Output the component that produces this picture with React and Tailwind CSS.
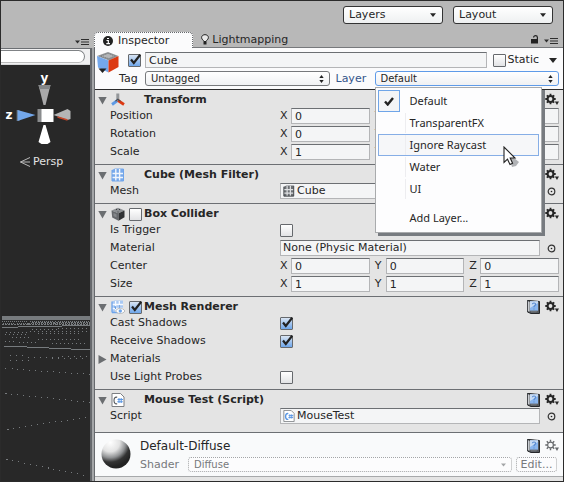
import React from "react";

function Check({ checked = false, label, id }) {
  return (
    <span className="grid size-[13px] shrink-0">
      <input
        id={id}
        type="checkbox"
        defaultChecked={checked}
        aria-label={label}
        className="peer col-start-1 row-start-1 size-[13px] appearance-none rounded-[1px] border border-[#66696d] bg-linear-to-b from-white to-[#e2e3e5] checked:from-[#d9e4f2] checked:to-[#6ea6ea]"
      />
      <svg
        viewBox="0 0 13 13"
        className="pointer-events-none invisible col-start-1 row-start-1 size-[13px] overflow-visible peer-checked:visible"
      >
        <path d="M3 5.5 L5.8 9 L12.2 0.8" fill="none" stroke="#222" strokeWidth="2.2" />
      </svg>
    </span>
  );
}

function Fold({ open = true }) {
  return (
    <svg viewBox="0 0 9 9" className="size-[9px] shrink-0" fill="#6b6e71">
      {open ? <path d="M0.3 1 H8.7 L4.5 8.6 Z" /> : <path d="M0.5 0 L8.5 4.5 L0.5 9 Z" />}
    </svg>
  );
}

function Gear({ dim = false }) {
  const color = dim ? "#66696c" : "#262626";
  return (
    <svg viewBox="0 0 14 14" className="h-[14px] w-[14px]">
      <circle cx="5.5" cy="6" r="2.9" fill="none" stroke={color} strokeWidth={dim ? 1.2 : 2} />
      <path
        d="M5.5 0.8v2M5.5 9.2v2M0.3 6h2M8.7 6h2M1.8 2.3L3.2 3.7M7.8 8.3L9.2 9.7M1.8 9.7L3.2 8.3M7.8 3.7L9.2 2.3"
        stroke={color}
        strokeWidth={dim ? 1.4 : 1.8}
      />
      <path d="M9.8 8.6H14L12 12Z" fill={color} />
    </svg>
  );
}

function HelpBook() {
  return (
    <svg viewBox="0 0 13 14" className="h-[14px] w-[13px]">
      <path d="M0.5 0.5H2L12.5 1.5V13.5H4L0.5 12Z" fill="#55585c" stroke="#26282b" />
      <path d="M0.5 0.5L3 1.8V12.2L0.5 11.5Z" fill="#c9cdd2" stroke="#26282b" strokeWidth=".6" />
      <path d="M3 1.2H11V10.8H3Z" fill="#8ab6ee" />
      <path d="M3 1.2H11V3L3 8Z" fill="#e4ecf6" opacity=".7" />
      <path d="M5.4 4.2C5.6 2.6 8.7 2.6 8.6 4.4C8.5 5.6 7 5.6 7 7.2M7 8.4V9.6" fill="none" stroke="#5a8cd2" strokeWidth="1.2" />
      <path d="M3 10.8H11L9 12.4H4Z" fill="#6d7176" />
    </svg>
  );
}

function Caret({ className }) {
  return (
    <svg viewBox="0 0 8 5" className={className}>
      <path d="M0 0H8L4 5Z" fill="currentColor" />
    </svg>
  );
}

function PaneMenu() {
  return (
    <svg viewBox="0 0 14 7" className="h-[7px] w-[14px]" fill="#2e2e2e">
      <path d="M0 1.5H5L2.5 4.5Z" />
      <path d="M6 0.5H14M6 3H14M6 5.5H14" stroke="#2e2e2e" strokeWidth="1.2" />
    </svg>
  );
}

function UpDown() {
  return (
    <svg viewBox="0 0 5 8" className="pointer-events-none col-start-1 row-start-1 mr-[6px] h-[8px] w-[5px] self-center justify-self-end" fill="#222">
      <path d="M0.3 3L2.5 0L4.7 3ZM0.3 5L2.5 8L4.7 5Z" />
    </svg>
  );
}

function Toolbar({ name }) {
  return (
    <div className="grid h-[18px] w-[100px]">
      <select
        aria-label={name}
        className="col-start-1 row-start-1 h-[18px] w-full appearance-none rounded-[3px] border border-[#333] bg-linear-to-b from-white to-[#eef0f1] pl-[5px] text-[11px] leading-[14px]"
      >
        <option>{name}</option>
      </select>
      <Caret className="pointer-events-none col-start-1 row-start-1 mr-[7px] h-[4px] w-[6px] self-center justify-self-end" />
    </div>
  );
}

function Section({ icon, title, enabled, help = false, last = false, children }) {
  return (
    <section className={`border-b border-[#6c6f73] pr-[4px] pl-[3px] ${last ? "pb-[7px]" : "pb-[3px]"}`}>
      <header className="flex h-[17px] items-center pt-[3px]">
        <Fold />
        <span className="ml-[4px] flex h-[14px] w-[18px] items-center">{icon}</span>
        <span className="w-[15px] shrink-0">
          {enabled !== undefined && <Check checked={enabled} label={`${title} enabled`} />}
        </span>
        <h2 className="flex-1 text-[11px] leading-[14px] font-bold whitespace-nowrap">{title}</h2>
        <span className="flex items-center gap-[5px]">
          {help && (
            <button aria-label={`${title} help`}>
              <HelpBook />
            </button>
          )}
          <button aria-label={`${title} settings`}>
            <Gear />
          </button>
        </span>
      </header>
      {children}
    </section>
  );
}

function Row({ label, id, children }) {
  return (
    <div className="flex h-[18px] items-center pl-[12px]">
      <label htmlFor={id} className="w-[170px] shrink-0 whitespace-nowrap">
        {label}
      </label>
      {children}
    </div>
  );
}

const fieldBox = "border border-[#b4b5b7] border-t-[#6c6f73] bg-[#f4f5f6]";

function Vector({ label, value }) {
  return (
    <Row label={label} id={`${label}-X`}>
      <div className="flex flex-1 gap-[5px]">
        {["X", "Y", "Z"].map((axis) => (
          <div key={axis} className="flex min-w-0 flex-1 items-center">
            <label htmlFor={`${label}-${axis}`} className="w-[11px] shrink-0">
              {axis}
            </label>
            <input
              id={`${label}-${axis}`}
              defaultValue={value}
              className={`h-[16px] w-full min-w-0 flex-1 pl-[3px] ${fieldBox}`}
            />
          </div>
        ))}
      </div>
    </Row>
  );
}

function ObjectField({ label, value, icon }) {
  return (
    <Row label={label} id={`field-${label}`}>
      <div className={`flex h-[16px] flex-1 items-center gap-[2px] pl-[2px] ${fieldBox}`}>
        {icon}
        <input id={`field-${label}`} readOnly value={value} className="w-full min-w-0 flex-1 bg-transparent" />
      </div>
      <button aria-label={`Pick ${label}`} className="ml-[7px] mr-[3px]">
        <svg viewBox="0 0 9 9" className="size-[9px]">
          <circle cx="4.5" cy="4.5" r="3.3" fill="none" stroke="#333" strokeWidth="1.2" />
          <circle cx="4.5" cy="4.5" r=".8" fill="#222" />
        </svg>
      </button>
    </Row>
  );
}

function Toggle({ label, checked }) {
  return (
    <Row label={label} id={`toggle-${label}`}>
      <Check id={`toggle-${label}`} checked={checked} />
    </Row>
  );
}

const CubeIcon = () => (
  <svg viewBox="0 0 22 22" className="size-[22px] shrink-0">
    <path d="M0 4L11 0L21.5 4L12 8.5Z" fill="#8f9295" />
    <path d="M4 4.2L11 1.4L17.5 4L12 6.6Z" fill="#b3b5b7" strokeDasharray="1 1" stroke="#6b6e71" strokeWidth=".7" />
    <path d="M0 4L11.5 8.5V20.5L1 15.5Z" fill="#74a8ec" />
    <path d="M11.5 8.5L21.5 4V15L11.5 20.5Z" fill="#dc3912" />
    <path d="M1.5 16.5H9.5L5.5 21Z" fill="#222" />
  </svg>
);

const TransformIcon = () => (
  <svg viewBox="0 0 14 14" className="size-[14px]" fill="none">
    <path d="M6.8 0.5V7.5" stroke="#94979a" strokeWidth="3" />
    <path d="M6.5 7.5L1 11.5" stroke="#5e9be6" strokeWidth="2.8" />
    <path d="M7 7.5L13 11.5" stroke="#dc3912" strokeWidth="2.8" />
    <path d="M4.5 8.2L6.8 6.3L9.5 8.2" stroke="#4c4f53" strokeWidth="1.2" />
  </svg>
);

const MeshIcon = ({ dark = false }) => (
  <svg viewBox="0 0 14 14" className={dark ? "size-[12px] shrink-0" : "size-[14px]"}>
    <path d="M1 2L4 0.5H12.5V13H1Z" fill={dark ? "#6d7074" : "#79aaeb"} />
    <path d="M1 5.5H12.5M1 9.5H12.5M4.8 1V13M8.6 1V13" stroke={dark ? "#dfe1e3" : "#f1f6fc"} strokeWidth="1.4" />
    <path d="M1 2V13H12.5V1" fill="none" stroke={dark ? "#3b3e42" : "#6ea4ea"} />
  </svg>
);

const ColliderIcon = () => (
  <svg viewBox="0 0 14 14" className="size-[14px]">
    <path d="M0.5 3.5L7 0.8L13.5 3.5L7.5 6.3Z" fill="#8c8f92" />
    <path d="M0.5 3.5L7.5 6.3V13.7L1.2 10.6Z" fill="#66696c" />
    <path d="M7.5 6.3L13.5 3.5V10.2L7.5 13.7Z" fill="#303234" />
    <path d="M2.5 6L5.5 7.3V10.5L2.5 9Z" fill="#85888b" />
    <path d="M5 2.8L6 2M9 3L8 2M7 4.5V5.5M9.5 8L11.5 7" stroke="#35383b" />
  </svg>
);

const RendererIcon = () => (
  <svg viewBox="0 0 14 14" className="size-[14px]">
    <path d="M1 1.5L4 0.5H12V12.5H1Z" fill="#a9c9f3" />
    <path d="M1 4.5H12M1 8.5H12M4.6 1V12.5M8.3 1V12.5" stroke="#f7faff" strokeWidth="1.3" />
    <path d="M1 12.5V1.5M1 12.5H7" stroke="#6ea4ea" strokeWidth="1.3" />
    <path d="M4.6 6.5V9M8.3 5V8M3 7H5" stroke="#5f97df" />
    <path d="M4.5 11C7 7.4 11.5 7.4 14 11C11.5 14.4 7 14.4 4.5 11Z" fill="#fff" stroke="#a8acb0" strokeWidth=".8" />
    <circle cx="9.3" cy="11" r="1.7" fill="#6ea4ea" />
  </svg>
);

const ScriptIcon = ({ small = false }) => (
  <svg viewBox="0 0 14 14" className={small ? "size-[12px] shrink-0" : "size-[14px]"} fill="none">
    <path d="M1 0.5H9.5L13 4V13.5H1Z" fill="#fff" stroke="#7c7f83" />
    <path d="M6.2 4.2C3.8 3.8 3 5.5 3 7.5C3 9.7 4 11.4 6.2 10.8" stroke={small ? "#5b97e3" : "#54585d"} strokeWidth={small ? 1.7 : 1.1} />
    <path d="M8 5V10M10.2 5V10M6.5 6.5H12M6.3 8.7H11.8" stroke="#5b97e3" strokeWidth="1.1" />
  </svg>
);

function LayerMenu() {
  const items = ["Default", "TransparentFX", "Ignore Raycast", "Water", "UI"];
  return (
    <div
      role="menu"
      className="absolute top-[16px] left-0 z-10 w-[167px] border border-[#a9abad] bg-[#fdfdfe] p-[2px] pb-[3px] font-['Noto_Sans','Open_Sans',sans-serif] text-[11px] leading-[20px] shadow-[3px_3px_0_#777b80]"
    >
      {items.map((item, i) => (
        <button
          key={item}
          role="menuitem"
          className={`flex h-[22px] w-full items-center border text-left ${
            i === 2 ? "border-[#86aee6] bg-[#f6f7f9]" : "border-transparent"
          }`}
        >
          <span
            className={`-ml-px flex h-[22px] w-[22px] shrink-0 items-center justify-center ${
              i === 0 ? "border border-[#6fa5e8] bg-[#f3f4f6]" : ""
            }`}
          >
            {i === 0 && (
              <svg viewBox="0 0 10 9" className="h-[9px] w-[10px]">
                <path d="M1 4.5L3.7 7.5L9 1" fill="none" stroke="#222" strokeWidth="2.4" />
              </svg>
            )}
          </span>
          <span className={`h-[20px] border-l ${i === 0 ? "border-transparent" : "border-[#ededf0]"} ml-[5px] pl-[4px]`}>
            {item}
          </span>
        </button>
      ))}
      <button role="menuitem" className="mt-[7px] flex h-[22px] w-full items-center pl-[32px] text-left">
        Add Layer...
      </button>
      <svg viewBox="0 0 18 22" className="absolute top-[58px] left-[127px] h-[22px] w-[18px]">
        <path d="M6 8L16 16L13 20L9 21L7 14Z" fill="#8f9296" opacity=".7" />
        <path d="M1 1V16.5L4.5 13.2L7 18.5L9.6 17.3L7.2 12H12Z" fill="#fff" stroke="#222" strokeWidth="1.1" />
      </svg>
    </div>
  );
}

function SceneView() {
  return (
    <div className="flex w-[93px] shrink-0 flex-col">
      <div className="flex h-[19px] items-end justify-end pr-[5px] pb-[2px]">
        <PaneMenu />
      </div>
      <div className="flex flex-1 flex-col border-r-2 border-[#a4a6a8]">
        <div className="flex flex-1 flex-col border-t border-r-2 border-t-[#6c6f73] border-r-[#66696d] bg-[#282828]">
          <div className="flex h-[16px] shrink-0 items-center border-b border-[#d9dadb] bg-[#f0f0f1] pr-[5px]">
            <input
              aria-label="Search scene"
              className="h-[13px] w-full rounded-r-full border border-l-0 border-[#808386] border-b-[#bbb] bg-white"
            />
          </div>
          <svg viewBox="0 0 88 87" className="h-[87px] w-full shrink-0 font-['DejaVu_Sans',sans-serif] font-bold" fill="#fff">
            <text x="39" y="17" fontSize="12">y</text>
            <text x="4" y="54" fontSize="12">z</text>
            <path d="M37 20H49L44 40H42Z" fill="#a9a9aa" />
            <path d="M37 20H49L48 24H38Z" fill="#858789" />
            <path d="M15 45H18V56H15Z" fill="#5d6165" />
            <path d="M16 45L34 50L16 56Z" fill="#73a7ea" />
            <path d="M36 44H41V57H36Z" fill="#8a8c8e" />
            <path d="M40 44H52V57H40Z" />
            <path d="M52 50L66 44L69 46V54L66 55Z" fill="#b4b5b6" />
            <path d="M56 52L66 55" stroke="#c7472a" strokeWidth="1.4" />
            <path d="M42 60H44L49 77L46 79H40L37 77Z" />
          </svg>
          <div className="flex items-center gap-[3px] pl-[19px] leading-[20px] text-[#e3e3e3]">
            <svg viewBox="0 0 10 10" className="size-[10px]" fill="none" stroke="#b9b9b9">
              <path d="M10 0.5L0.5 5L10 9.5M0.5 5H10" />
            </svg>
            Persp
          </div>
          <svg viewBox="0 0 88 166" className="mt-auto h-[166px] w-full" fill="none" stroke="#777b7e" shapeRendering="crispEdges">
            <path d="M0 3H89" strokeWidth="4" />
            <path d="M0 6.5H89M1 8.5H89" strokeDasharray="1 1" />
            <path d="M30 7.5H89M0 9.5H89" strokeDasharray="2 1" />
            <path d="M0 12.5H16M16 11.5H60M60 10.5H89M2 31.5H25M25 32.5H47M47 33.5H69M69 34.5H89" />
            <path d="M30 14.5H56M56 13.5H88M4 17.5H28M28 16.5H88M36 18.5H78M3 19.5H24M10 22.5H30M36 24.5H80M3 26.5H14M17 27.5H34M50 28.5H86" strokeDasharray="1 3" />
            <path d="M8 40.5H26M26 42.5H60M60 41.5H89M8 45.5H28M50 43.5H86" strokeDasharray="1 5" />
            <path d="M4 53.5L89 59.5M4 78.5L89 87.5M6 114.5L89 101.5M5 144.5L84 160.5" strokeDasharray="1 5" />
          </svg>
        </div>
      </div>
    </div>
  );
}

function ObjectHeader() {
  const selectBox =
    "col-start-1 row-start-1 h-[15px] w-full appearance-none rounded-[3px] border bg-linear-to-b from-white to-[#f0f1f3] pl-[5px] text-[10px] leading-[12px]";
  return (
    <div className="border-b border-[#2b2b2b] bg-[#fbfbfc] pr-[4px] pl-[2px]">
      <div className="flex h-[41px] pt-[4px]">
        <CubeIcon />
        <div className="flex min-w-0 flex-1 flex-col gap-[3px]">
          <div className="flex h-[16px] items-center pl-[9px]">
            <Check checked label="Active" />
            <input
              aria-label="Name"
              defaultValue="Cube"
              className={`ml-[4px] h-[16px] min-w-0 flex-1 pl-[3px] ${fieldBox}`}
            />
            <label className="ml-[6px] flex items-center gap-[2px]">
              <Check />
              Static
            </label>
            <button aria-label="Static options" className="mr-[2px] ml-[10px]">
              <Caret className="h-[5px] w-[8px]" />
            </button>
          </div>
          <div className="flex h-[15px] items-center">
            <label htmlFor="tag" className="w-[26px] shrink-0">
              Tag
            </label>
            <div className="grid flex-1">
              <select id="tag" className={`${selectBox} border-[#77797c]`}>
                <option>Untagged</option>
              </select>
              <UpDown />
            </div>
            <label htmlFor="layer" className="ml-[6px] w-[39px] shrink-0 text-[#34558a]">
              Layer
            </label>
            <div className="relative grid flex-1">
              <select id="layer" className={`${selectBox} border-[#5f9be8]`}>
                <option>Default</option>
              </select>
              <UpDown />
              <LayerMenu />
            </div>
          </div>
        </div>
      </div>
    </div>
  );
}

function MaterialPreview() {
  return (
    <div className="flex h-[44px] border-b border-[#a7a9ab] bg-[#f9fafb] pr-[4px] pl-[6px]">
      <svg viewBox="0 0 30 30" className="mt-[6px] size-[30px] shrink-0">
        <defs>
          <radialGradient id="ball" cx=".3" cy=".1" r=".85">
            <stop offset="0" stopColor="#fff" />
            <stop offset=".38" stopColor="#e3e3e3" />
            <stop offset=".62" stopColor="#909294" />
            <stop offset=".8" stopColor="#333" />
            <stop offset="1" stopColor="#222" />
          </radialGradient>
        </defs>
        <circle cx="15" cy="15" r="14.5" fill="url(#ball)" />
      </svg>
      <div className="ml-[9px] flex flex-1 flex-col pt-[4px]">
        <div className="flex h-[18px] items-center">
          <h2 className="flex-1 text-[12px]">Default-Diffuse</h2>
          <span className="flex items-center gap-[5px]">
            <button aria-label="Material help">
              <HelpBook />
            </button>
            <button aria-label="Material settings">
              <Gear dim />
            </button>
          </span>
        </div>
        <div className="mt-[2px] flex h-[15px] items-center text-[#77797c]">
          <label htmlFor="shader" className="w-[48px]">
            Shader
          </label>
          <div className="grid flex-1">
            <select
              id="shader"
              disabled
              className="col-start-1 row-start-1 h-[15px] w-full appearance-none rounded-[3px] border border-dotted border-[#a3a5a7] bg-[#fcfcfd] pl-[5px] text-[10px] leading-[12px] opacity-100"
            >
              <option>Diffuse</option>
            </select>
            <Caret className="pointer-events-none col-start-1 row-start-1 mr-[6px] h-[4px] w-[5px] self-center justify-self-end text-[#a3a5a7]" />
          </div>
          <button disabled className="ml-[4px] mr-[2px] h-[15px] w-[41px] rounded-[3px] border border-dotted border-[#a3a5a7] bg-[#fcfcfd] leading-[12px]">
            Edit...
          </button>
        </div>
      </div>
    </div>
  );
}

function Inspector() {
  return (
    <div className="flex min-w-0 flex-1 flex-col">
      <div className="flex h-[19px] items-end">
        <button className="flex h-[16px] items-center gap-[5px] rounded-t-[4px] border border-b-0 border-dotted border-[#66696d] bg-[#fbfbfc] pr-[23px] pl-[8px] leading-[14px]">
          <svg viewBox="0 0 10 10" className="size-[10px]">
            <circle cx="5" cy="5" r="5" fill="#222" />
            <path d="M4 2.5H6M3.5 4.5H5.3V7.5M3.3 7.7H7" stroke="#fff" strokeWidth="1.2" fill="none" />
          </svg>
          Inspector
        </button>
        <div className="flex h-[16px] flex-1 items-center border-b border-[#77797c] pl-[8px]">
          <button className="flex items-center gap-[3px] leading-[14px]">
            <svg viewBox="0 0 8 11" className="h-[11px] w-[8px]">
              <path d="M2.8 7.5C2.8 6.2 0.6 5.6 0.6 3.6C0.6 -0.3 7.4 -0.3 7.4 3.6C7.4 5.6 5.2 6.2 5.2 7.5Z" fill="#e9e9e9" stroke="#222" />
              <path d="M2.5 8H5.5V10.5H2.5Z" fill="#222" />
            </svg>
            Lightmapping
          </button>
          <span className="flex-1" />
          <svg viewBox="0 0 8 9" className="mr-[5px] h-[9px] w-[8px]">
            <path d="M0 4H7V8.5H0Z" fill="#222" />
            <path d="M2.6 2.5C2.6 0 6.4 0 6.4 2.5V4" fill="none" stroke="#222" strokeWidth="1.2" />
          </svg>
          <span className="mt-[3px] mr-[5px]">
            <PaneMenu />
          </span>
        </div>
      </div>
      <div className="flex flex-col border-l border-[#66696d] bg-[#e4e4e4]">
        <ObjectHeader />
        <Section icon={<TransformIcon />} title="Transform">
          <Vector label="Position" value="0" />
          <Vector label="Rotation" value="0" />
          <Vector label="Scale" value="1" />
        </Section>
        <Section icon={<MeshIcon />} title="Cube (Mesh Filter)">
          <ObjectField label="Mesh" value="Cube" icon={<MeshIcon dark />} />
        </Section>
        <Section icon={<ColliderIcon />} title="Box Collider" enabled={false}>
          <Toggle label="Is Trigger" />
          <ObjectField label="Material" value="None (Physic Material)" />
          <Vector label="Center" value="0" />
          <Vector label="Size" value="1" />
        </Section>
        <Section icon={<RendererIcon />} title="Mesh Renderer" enabled help>
          <Toggle label="Cast Shadows" checked />
          <Toggle label="Receive Shadows" checked />
          <button className="flex h-[18px] items-center gap-[3px]">
            <Fold open={false} />
            Materials
          </button>
          <Toggle label="Use Light Probes" />
        </Section>
        <Section icon={<ScriptIcon />} title="Mouse Test (Script)" help last>
          <ObjectField label="Script" value="MouseTest" icon={<ScriptIcon small />} />
        </Section>
        <MaterialPreview />
        <div className="h-[4px]" />
      </div>
    </div>
  );
}

export default function App() {
  return (
    <main className="border border-[#2b2b2b] bg-[#b8b8b8] font-['DejaVu_Sans',Verdana,sans-serif] text-[11px] leading-[14px] text-[#262626]">
      <div className="flex h-[28px] justify-end gap-[10px] pt-[5px] pr-[10px]">
        <Toolbar name="Layers" />
        <Toolbar name="Layout" />
      </div>
      <div className="flex">
        <SceneView />
        <Inspector />
      </div>
    </main>
  );
}
